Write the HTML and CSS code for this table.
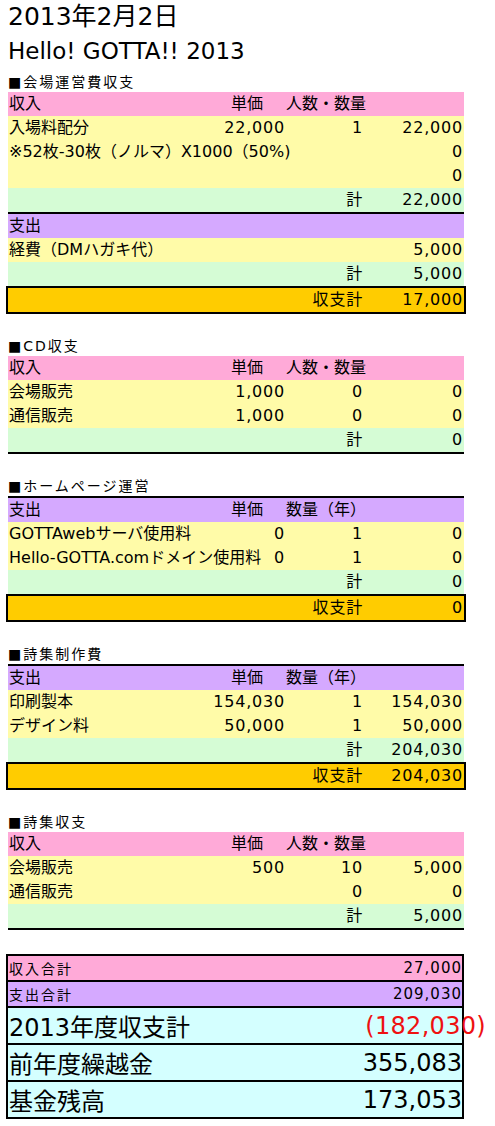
FILE: index.html
```html
<!DOCTYPE html>
<html lang="ja">
<head>
<meta charset="utf-8">
<title>Hello! GOTTA!! 2013</title>
<link rel="stylesheet" href="styles.css">
</head>
<body>
<div class="page">
  <div class="title">2013年2月2日</div>
  <div class="subtitle">Hello! GOTTA!! 2013</div>

  <section class="sec first">
    <div class="sec-title">■会場運営費収支</div>
    <div class="row pink"><span class="c1">収入</span><span class="c2 ctr">単価</span><span class="c3 ctr">人数・数量</span><span class="c4"></span></div>
    <div class="row yellow"><span class="c1">入場料配分</span><span class="c2 num">22,000</span><span class="c3 num">1</span><span class="c4 num">22,000</span></div>
    <div class="row yellow"><span class="c1">※52枚-30枚（ノルマ）X1000（50%)</span><span class="c2"></span><span class="c3"></span><span class="c4 num">0</span></div>
    <div class="row yellow"><span class="c1"></span><span class="c2"></span><span class="c3"></span><span class="c4 num">0</span></div>
    <div class="row green"><span class="c1"></span><span class="c2"></span><span class="c3 num">計</span><span class="c4 num">22,000</span></div>
    <div class="rule"></div>
    <div class="row purple"><span class="c1">支出</span><span class="c2"></span><span class="c3"></span><span class="c4"></span></div>
    <div class="row yellow"><span class="c1">経費（DMハガキ代）</span><span class="c2"></span><span class="c3"></span><span class="c4 num">5,000</span></div>
    <div class="row green"><span class="c1"></span><span class="c2"></span><span class="c3 num">計</span><span class="c4 num">5,000</span></div>
    <div class="row gold boxed"><span class="c1"></span><span class="c2"></span><span class="c3 num">収支計</span><span class="c4 num">17,000</span></div>
  </section>

  <section class="sec">
    <div class="sec-title">■CD収支</div>
    <div class="row pink"><span class="c1">収入</span><span class="c2 ctr">単価</span><span class="c3 ctr">人数・数量</span><span class="c4"></span></div>
    <div class="row yellow"><span class="c1">会場販売</span><span class="c2 num">1,000</span><span class="c3 num">0</span><span class="c4 num">0</span></div>
    <div class="row yellow"><span class="c1">通信販売</span><span class="c2 num">1,000</span><span class="c3 num">0</span><span class="c4 num">0</span></div>
    <div class="row green"><span class="c1"></span><span class="c2"></span><span class="c3 num">計</span><span class="c4 num">0</span></div>
    <div class="rule"></div>
  </section>

  <section class="sec">
    <div class="sec-title">■ホームページ運営</div>
    <div class="rule"></div>
    <div class="row purple"><span class="c1">支出</span><span class="c2 ctr">単価</span><span class="c3 ctr">数量（年）</span><span class="c4"></span></div>
    <div class="row yellow"><span class="c1">GOTTAwebサーバ使用料</span><span class="c2 num">0</span><span class="c3 num">1</span><span class="c4 num">0</span></div>
    <div class="row yellow"><span class="c1">Hello-GOTTA.comドメイン使用料</span><span class="c2 num">0</span><span class="c3 num">1</span><span class="c4 num">0</span></div>
    <div class="row green"><span class="c1"></span><span class="c2"></span><span class="c3 num">計</span><span class="c4 num">0</span></div>
    <div class="row gold boxed"><span class="c1"></span><span class="c2"></span><span class="c3 num">収支計</span><span class="c4 num">0</span></div>
  </section>

  <section class="sec">
    <div class="sec-title">■詩集制作費</div>
    <div class="rule"></div>
    <div class="row purple"><span class="c1">支出</span><span class="c2 ctr">単価</span><span class="c3 ctr">数量（年）</span><span class="c4"></span></div>
    <div class="row yellow"><span class="c1">印刷製本</span><span class="c2 num">154,030</span><span class="c3 num">1</span><span class="c4 num">154,030</span></div>
    <div class="row yellow"><span class="c1">デザイン料</span><span class="c2 num">50,000</span><span class="c3 num">1</span><span class="c4 num">50,000</span></div>
    <div class="row green"><span class="c1"></span><span class="c2"></span><span class="c3 num">計</span><span class="c4 num">204,030</span></div>
    <div class="row gold boxed"><span class="c1"></span><span class="c2"></span><span class="c3 num">収支計</span><span class="c4 num">204,030</span></div>
  </section>

  <section class="sec">
    <div class="sec-title">■詩集収支</div>
    <div class="row pink"><span class="c1">収入</span><span class="c2 ctr">単価</span><span class="c3 ctr">人数・数量</span><span class="c4"></span></div>
    <div class="row yellow"><span class="c1">会場販売</span><span class="c2 num">500</span><span class="c3 num">10</span><span class="c4 num">5,000</span></div>
    <div class="row yellow"><span class="c1">通信販売</span><span class="c2"></span><span class="c3 num">0</span><span class="c4 num">0</span></div>
    <div class="row green"><span class="c1"></span><span class="c2"></span><span class="c3 num">計</span><span class="c4 num">5,000</span></div>
    <div class="rule"></div>
  </section>

  <div class="summary">
    <div class="srow small pink"><span class="slabel">収入合計</span><span class="num">27,000</span></div>
    <div class="srow small purple"><span class="slabel">支出合計</span><span class="num">209,030</span></div>
    <div class="srow big cyan"><span>2013年度収支計</span><span class="num neg">(182,030)</span></div>
    <div class="srow big cyan"><span>前年度繰越金</span><span class="num">355,083</span></div>
    <div class="srow big cyan"><span>基金残高</span><span class="num">173,053</span></div>
  </div>
</div>
</body>
</html>
```

FILE: styles.css
```css
html, body {
  margin: 0;
  padding: 0;
  background: #ffffff;
}

body {
  font-family: "DejaVu Sans", "Noto Sans CJK JP", sans-serif;
  color: #000;
}

.page {
  width: 456px;
  padding: 0 0 0 8px;
}

.title {
  font-size: 25px;
  line-height: 34px;
  height: 34px;
}

.subtitle {
  font-size: 23px;
  line-height: 34px;
  height: 34px;
}

.sec {
  margin-top: 22px;
}

.sec.first {
  margin-top: 4px;
}

.sec-title {
  height: 20px;
  line-height: 20px;
  font-size: 14px;
  letter-spacing: 2px;
}

.row {
  display: grid;
  grid-template-columns: 200px 78px 78px 100px;
  height: 24px;
  align-items: center;
  font-size: 16px;
  line-height: 24px;
}

.row span {
  white-space: nowrap;
  min-width: 0;
}

.c1 {
  padding-left: 1px;
  overflow: visible;
}

.num {
  text-align: right;
  padding-right: 1px;
}

.row .num {
  letter-spacing: 0.8px;
}

.ctr {
  text-align: center;
}

.pink { background: #ffaad8; }
.yellow { background: #fffba8; }
.green { background: #d5fcd5; }
.purple { background: #d5a9ff; }
.gold { background: #ffcc00; }
.cyan { background: #d4ffff; }

.rule {
  height: 2px;
  background: #000;
}

.boxed {
  border: 2px solid #000;
  margin: 0 -2px;
  padding: 0;
  box-sizing: content-box;
}

.summary {
  margin-top: 24px;
  margin-left: -2px;
  width: 454px;
  border: 2px solid #000;
  background: #000;
  display: flex;
  flex-direction: column;
  gap: 2px;
}

.srow {
  display: flex;
  justify-content: space-between;
  align-items: center;
  white-space: nowrap;
}

.srow.small {
  height: 24px;
  font-size: 14px;
  padding-left: 1px;
}

.srow.small .slabel {
  letter-spacing: 2px;
}

.srow.small .num {
  font-size: 15px;
  letter-spacing: 1px;
  padding-right: 0;
}

.srow.big {
  height: 35px;
  font-size: 24px;
  padding-left: 1px;
}

.srow.big .num {
  padding-right: 0;
}

.srow.big .neg {
  color: #ee1111;
  font-size: 24px;
  letter-spacing: 0.3px;
  margin-right: -24px;
}
```
